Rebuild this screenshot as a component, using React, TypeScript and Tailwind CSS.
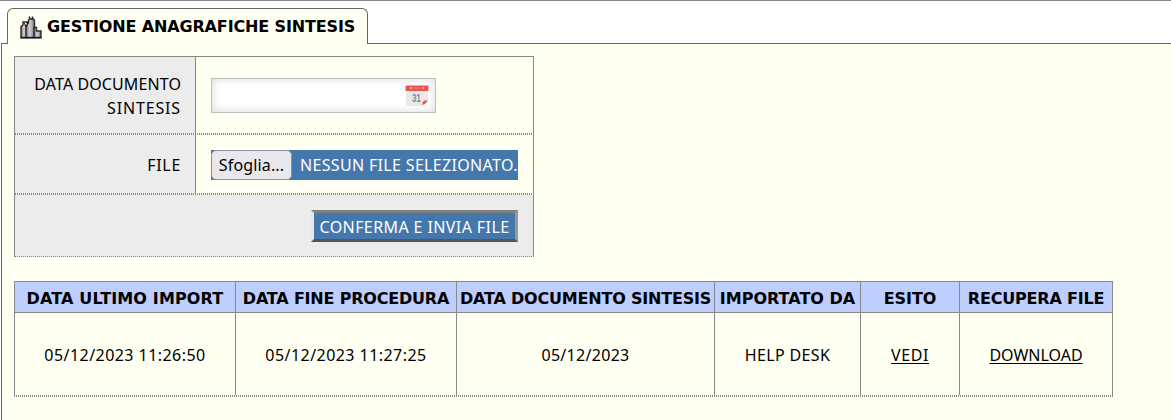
import type { ReactNode } from "react";

function TowersIcon() {
  return (
    <svg width="22" height="23" viewBox="0 0 22 23" className="shrink-0" aria-hidden="true">
      <defs>
        <linearGradient id="stone" x1="0" x2="1" y1="0" y2="0">
          <stop offset="0" stopColor="#77737a" />
          <stop offset=".45" stopColor="#d6d3d6" />
          <stop offset="1" stopColor="#77737a" />
        </linearGradient>
      </defs>
      <path d="M1 21.500V10.500L3 9V6H7.500V21.500z" fill="url(#stone)" stroke="#2a282b" strokeWidth="1.400" />
      <path d="M6 21.500V9L8.500 7V4L10 3H13.500L14.500 5V21.500z" fill="url(#stone)" stroke="#2a282b" strokeWidth="1.400" />
      <path d="M9.500 0.500v3M12.500 0.500v3" stroke="#2a282b" strokeWidth="1.500" />
      <path d="M14 21.500V11.500h2.500v3.500h4.500v6.500z" fill="url(#stone)" stroke="#2a282b" strokeWidth="1.400" />
      <path d="M3.500 6h4v4l-2 1z" fill="#1b1a1c" />
      <path d="M5 6.500l1.500 2" stroke="#fff" strokeWidth="1.300" />
      <path d="M0.500 21.800h21" stroke="#1b1a1c" strokeWidth="1.400" />
    </svg>
  );
}

function CalendarIcon() {
  return (
    <svg width="24" height="24" viewBox="0 0 24 24" className="shrink-0" aria-hidden="true">
      <path d="M1 6h22v10l-6 6H2.500L1 20.500z" fill="#e9e9eb" />
      <rect x="0.500" y="1.500" width="23" height="5.500" rx="1" fill="#e8564c" />
      <rect x="5" y="3" width="2" height="2" fill="#f5aaa4" />
      <rect x="17" y="3" width="2" height="2" fill="#f5aaa4" />
      <rect x="9" y="3.500" width="6" height="1.200" fill="#ef7d75" />
      <text x="11.500" y="18" textAnchor="middle" fontSize="10.500" fontWeight="700" fill="#858585" className="font-['Liberation_Sans',sans-serif]" textLength="8.500" lengthAdjust="spacingAndGlyphs">31</text>
      <path d="M17.500 21V18.500L19 16.500h4c-1 1-2.500 4-5.500 4.500z" fill="#e8564c" />
    </svg>
  );
}

function DottedRule({ thin = false }: { thin?: boolean }) {
  return (
    <div
      className={
        thin
          ? "h-px bg-[repeating-linear-gradient(90deg,#888_0_1px,transparent_1px_2px)]"
          : "h-[2px] bg-[repeating-linear-gradient(90deg,#888_0_1px,transparent_1px_2px)]"
      }
    />
  );
}

const headers: { label: string; spacing: string }[] = [
  { label: "DATA ULTIMO IMPORT", spacing: "tracking-[0.14px]" },
  { label: "DATA FINE PROCEDURA", spacing: "tracking-[-0.2px]" },
  { label: "DATA DOCUMENTO SINTESIS", spacing: "tracking-[-0.2px]" },
  { label: "IMPORTATO DA", spacing: "tracking-[0px]" },
  { label: "ESITO", spacing: "tracking-[-0.1px]" },
  { label: "RECUPERA FILE", spacing: "tracking-[-0.2px]" },
];

const cells: { content: ReactNode; spacing: string }[] = [
  { content: "05/12/2023 11:26:50", spacing: "tracking-[0.45px]" },
  { content: "05/12/2023 11:27:25", spacing: "tracking-[0.45px]" },
  { content: "05/12/2023", spacing: "tracking-[0.3px]" },
  { content: "HELP DESK", spacing: "tracking-[0.35px]" },
  { content: <a href="#vedi" className="underline underline-offset-2">VEDI</a>, spacing: "tracking-[0.6px]" },
  { content: <a href="#download" className="underline underline-offset-2">DOWNLOAD</a>, spacing: "tracking-[0px]" },
];

export default function App() {
  return (
    <div className="flex h-[420px] w-full flex-col overflow-hidden border-t border-[#888] bg-white font-['Noto_Sans',sans-serif] text-[16px] leading-6 text-black">
      <div className="mt-[7px] flex h-9 shrink-0 pl-px">
        <div className="w-[6px] border-b border-[#666]" />
        <div className="flex w-[361px] items-start rounded-t-[6px] border border-b-0 border-[#666] bg-[#fffff2] pl-3 pt-[7px]">
          <TowersIcon />
          <h1 className="-mt-px ml-[5px] whitespace-nowrap font-['DejaVu_Sans',sans-serif] text-[16px] font-bold leading-6 tracking-[-0.14px]">
            GESTIONE ANAGRAFICHE SINTESIS
          </h1>
        </div>
        <div className="flex-1 border-b border-[#666]" />
      </div>

      <main className="ml-px flex-1 border-l border-[#666] bg-[#fffff2] pl-3 pt-3">
        <form className="w-[520px] border-x border-t border-[#888]">
          <div className="flex h-[76px]">
            <label className="flex w-[181px] flex-col items-end justify-center border-r border-[#888] bg-[#ececec] pr-[14px] pt-px">
              <span className="whitespace-nowrap tracking-[0.1px]">DATA DOCUMENTO</span>
              <span className="tracking-[0.85px]">SINTESIS</span>
            </label>
            <div className="pl-[15px] pt-[21px]">
              <div className="flex h-[35px] w-[225px] items-start justify-end border border-[#c0c0c0] bg-white pr-[6px] pt-[5px] shadow-[inset_0_0_10px_#d9d9dd]">
                <CalendarIcon />
              </div>
            </div>
          </div>
          <div className="bg-[linear-gradient(90deg,#ececec_181px,transparent_181px)]">
            <DottedRule />
          </div>
          <div className="flex h-[58px]">
            <label className="flex w-[181px] items-center justify-end border-r border-[#888] bg-[#ececec] pr-[14px] pt-[2px] tracking-[0.7px]">
              FILE
            </label>
            <div className="pl-[15px] pt-[15px]">
              <div className="flex h-[30px] w-[307px] items-center bg-[#4478ad] text-white">
                <button type="button" className="h-[30px] w-[81px] whitespace-nowrap rounded-[5px] border border-[#8f8f9d] bg-[#e9e9ed] leading-7 tracking-[0.15px] text-black">
                  Sfoglia...
                </button>
                <span className="ml-2 whitespace-nowrap tracking-[0.33px]">NESSUN FILE SELEZIONATO.</span>
              </div>
            </div>
          </div>
          <div className="bg-[linear-gradient(90deg,#ececec_181px,transparent_181px)]">
            <DottedRule />
          </div>
          <div className="flex h-[61px] justify-end bg-[#ececec] pr-[15px] pt-[15px]">
            <button type="button" className="h-8 w-[207px] whitespace-nowrap border-[3px] border-b-[#555] border-l-[#e6e6e6] border-r-[#999] border-t-[#808080] bg-[#4478ad] pt-px leading-6 tracking-[0.4px] text-white">
              CONFERMA E INVIA FILE
            </button>
          </div>
          <div className="bg-[#ececec]">
            <DottedRule thin />
          </div>
        </form>

        <section className="mt-6 w-[1099px] border-r border-[#888]">
          <div className="grid h-8 grid-cols-[221px_221px_258px_146px_99px_153px] border-y border-[#888] bg-[#bdceff] font-['DejaVu_Sans',sans-serif] text-[16px] font-bold">
            {headers.map((h) => (
              <div key={h.label} className="flex items-center justify-center whitespace-nowrap border-l border-[#888] pt-[3px]">
                <span className={h.spacing}>{h.label}</span>
              </div>
            ))}
          </div>
          <div className="grid h-[82px] grid-cols-[221px_221px_258px_146px_99px_153px]">
            {cells.map((c, i) => (
              <div key={i} className="flex items-center justify-center whitespace-nowrap border-l border-[#888] pt-px">
                <span className={c.spacing}>{c.content}</span>
              </div>
            ))}
          </div>
          <DottedRule />
        </section>
      </main>
    </div>
  );
}
